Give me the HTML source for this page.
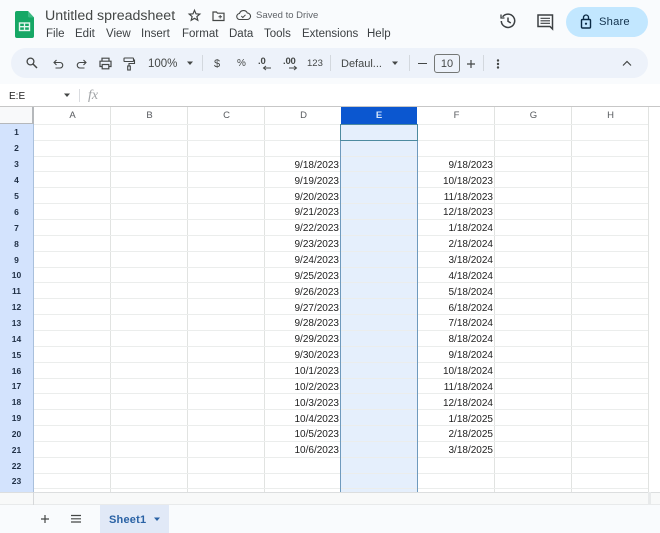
<!DOCTYPE html>
<html><head><meta charset="utf-8">
<style>
*{box-sizing:border-box}
html,body{margin:0;padding:0;width:660px;height:533px;overflow:hidden;background:#f9fbfd;font-family:"Liberation Sans",sans-serif;color:#3c4043}
.a{position:absolute;white-space:nowrap}
.m{top:27px;font-size:11.5px;line-height:14px;color:#3c4043}
.t{top:57px;font-size:11px;line-height:14px;color:#444746}
.ch{top:107px;height:17px;line-height:18px;font-size:9.5px;text-align:center;color:#575a5e;width:77px}
.v{background:#e1e3e1;width:1px}
.h{background:#ebedec;height:1px;left:34px;width:614px}
.rn{left:0;width:33px;text-align:center;font-size:8.5px;font-weight:bold;color:#1f2f45;line-height:16px;height:16px}
.d{font-size:10px;text-align:right;color:#222;line-height:16px;height:16px}
svg{position:absolute;overflow:visible}
</style></head><body>

<!-- header logo -->
<svg style="left:15px;top:11px" width="20" height="27" viewBox="0 0 20 27"><path d="M2 0H13L19 6.500V25a2 2 0 0 1-2 2H2a2 2 0 0 1-2-2V2a2 2 0 0 1 2-2z" fill="#16a765"/><path d="M13 0L19 6.500H14.500a1.500 1.500 0 0 1-1.500-1.500z" fill="#3dba83"/><rect x="4.500" y="12" width="10" height="7.500" fill="none" stroke="#e6f6ee" stroke-width="1.400"/><path d="M9.500 12v7.500M4.500 15.700h10" stroke="#e6f6ee" stroke-width="1.300"/></svg>

<div class="a" style="left:45px;top:7px;font-size:14.2px;line-height:18px;color:#444746">Untitled spreadsheet</div>
<svg style="left:188px;top:9px" width="13" height="13" viewBox="0 0 13 13"><path d="M6.500 1.300l1.500 3.500 3.800.3-2.900 2.500.9 3.700-3.300-2-3.300 2 .9-3.700L1.200 5.100 5 4.800z" fill="none" stroke="#444746" stroke-width="1.200"/></svg>
<svg style="left:212px;top:10px" width="13" height="12" viewBox="0 0 13 12"><path d="M1 2h3.500l1 1.200H12V10.500H1z" fill="none" stroke="#444746" stroke-width="1.200"/><path d="M6.500 6.800h3.500M8.200 5v3.500" stroke="#444746" stroke-width="1"/></svg>
<svg style="left:236px;top:9px" width="15" height="12" viewBox="0 0 15 12"><path d="M4 10.500a3 3 0 0 1-.5-6A4.200 4.200 0 0 1 11.300 4a3.200 3.200 0 0 1 0 6.500z" fill="none" stroke="#444746" stroke-width="1.100"/><path d="M5.300 7l1.500 1.500 2.700-2.700" fill="none" stroke="#444746" stroke-width="1"/></svg>
<div class="a" style="left:256px;top:10px;font-size:9.500px;line-height:12px;color:#5f6368">Saved to Drive</div>

<div class="a m" style="left:46px">File</div>
<div class="a m" style="left:75px">Edit</div>
<div class="a m" style="left:106px">View</div>
<div class="a m" style="left:141px">Insert</div>
<div class="a m" style="left:182px">Format</div>
<div class="a m" style="left:229px">Data</div>
<div class="a m" style="left:264px">Tools</div>
<div class="a m" style="left:302px">Extensions</div>
<div class="a m" style="left:367px">Help</div>

<!-- right header -->
<svg style="left:500px;top:13px" width="16" height="16" viewBox="0 0 16 16"><path d="M2.600 3.800A6.700 6.700 0 1 1 1.300 8" fill="none" stroke="#3c4043" stroke-width="1.500"/><path d="M1 1.500V5H4.500" fill="none" stroke="#3c4043" stroke-width="1.300"/><path d="M8 4.500V8.300L10.800 10" fill="none" stroke="#3c4043" stroke-width="1.500"/></svg>
<svg style="left:537px;top:14px" width="17" height="16" viewBox="0 0 17 16"><path d="M1 1H15.500V15L13 12.500H1z" fill="none" stroke="#3c4043" stroke-width="1.500"/><path d="M3.500 4.300H13M3.500 6.800H13M3.500 9.300H13" stroke="#3c4043" stroke-width="1.200"/></svg>
<div class="a" style="left:566px;top:7px;width:82px;height:30px;border-radius:15px;background:#c2e7ff"></div>
<svg style="left:580px;top:14px" width="12" height="15" viewBox="0 0 12 15"><rect x="1.500" y="5.500" width="9" height="8.500" rx="1" fill="none" stroke="#0b2a44" stroke-width="1.400"/><path d="M3.500 5.500V3.500a2.500 2.500 0 0 1 5 0V5.500" fill="none" stroke="#0b2a44" stroke-width="1.300"/><circle cx="6" cy="9.700" r="1.100" fill="#0b2a44"/></svg>
<div class="a" style="left:599px;top:15px;font-size:11.2px;line-height:15px;color:#12324d;letter-spacing:.2px">Share</div>

<!-- toolbar -->
<div class="a" style="left:11px;top:48px;width:637px;height:30px;border-radius:15px;background:#edf2fa"></div>
<svg style="left:26px;top:57px" width="12" height="12" viewBox="0 0 12 12"><circle cx="4.500" cy="4.500" r="3.400" fill="none" stroke="#444746" stroke-width="1.300"/><path d="M7 7l4 4" stroke="#444746" stroke-width="1.500"/></svg>
<svg style="left:53px;top:59px" width="11" height="10" viewBox="0 0 11 10"><path d="M3.500 1L1 3.500 3.500 6" fill="none" stroke="#444746" stroke-width="1.100"/><path d="M1.500 3.500H7a2.700 2.700 0 0 1 0 5.500H2.500" fill="none" stroke="#444746" stroke-width="1.100"/></svg>
<svg style="left:76px;top:59px" width="11" height="10" viewBox="0 0 11 10"><path d="M7.500 1L10 3.500 7.500 6" fill="none" stroke="#444746" stroke-width="1.100"/><path d="M9.500 3.500H4a2.700 2.700 0 0 0 0 5.500H8.500" fill="none" stroke="#444746" stroke-width="1.100"/></svg>
<svg style="left:99px;top:57px" width="13" height="13" viewBox="0 0 13 13"><path d="M3 4V1.200H10V4M3 9.500H1V4.200H12V9.500H10" fill="none" stroke="#444746" stroke-width="1.200"/><rect x="3.200" y="7.500" width="6.600" height="4.300" fill="none" stroke="#444746" stroke-width="1.200"/></svg>
<svg style="left:123px;top:57px" width="12" height="14" viewBox="0 0 12 14"><rect x="1" y="1" width="9.500" height="3.500" rx=".6" fill="none" stroke="#444746" stroke-width="1.100"/><path d="M10.500 3H11.500V6.500H6V9" fill="none" stroke="#444746" stroke-width="1.100"/><rect x="4.700" y="9" width="2.600" height="4" fill="none" stroke="#444746" stroke-width="1.100"/></svg>
<div class="a t" style="left:148px;top:57px;font-size:11.5px">100%</div>
<svg style="left:186px;top:61px" width="8" height="5"><path d="M1 .5h6L4 4z" fill="#444746"/></svg>
<div class="a" style="left:202px;top:55px;width:1px;height:16px;background:#d3d8de"></div>
<div class="a t" style="left:214px;font-size:11px">$</div>
<div class="a t" style="left:237px;font-size:10px">%</div>
<div class="a t" style="left:258px;top:55px;font-size:9.500px;font-weight:bold;letter-spacing:-.2px">.0</div>
<svg style="left:262px;top:65px" width="10" height="6"><path d="M9 3H2M4 1L1.500 3 4 5" fill="none" stroke="#444746" stroke-width="1"/></svg>
<div class="a t" style="left:283px;top:55px;font-size:9.500px;font-weight:bold;letter-spacing:-.2px">.00</div>
<svg style="left:288px;top:65px" width="10" height="6"><path d="M1 3H8M6 1L8.500 3 6 5" fill="none" stroke="#444746" stroke-width="1"/></svg>
<div class="a t" style="left:307px;font-size:9.500px">123</div>
<div class="a" style="left:330px;top:55px;width:1px;height:16px;background:#d3d8de"></div>
<div class="a t" style="left:341px;font-size:11px">Defaul...</div>
<svg style="left:391px;top:61px" width="8" height="5"><path d="M1 .5h6L4 4z" fill="#444746"/></svg>
<div class="a" style="left:409px;top:55px;width:1px;height:16px;background:#d3d8de"></div>
<div class="a" style="left:418px;top:63px;width:9px;height:1.300px;background:#444746"></div>
<div class="a" style="left:434px;top:54px;width:26px;height:19px;border:1px solid #747775;border-radius:3px;text-align:center;font-size:11px;line-height:18px;color:#444746">10</div>
<svg style="left:466px;top:59px" width="10" height="10"><path d="M5 1v8M1 5h8" stroke="#444746" stroke-width="1.200"/></svg>
<div class="a" style="left:483px;top:55px;width:1px;height:16px;background:#d3d8de"></div>
<svg style="left:496px;top:59px" width="4" height="11"><circle cx="2" cy="1.500" r="1.200" fill="#444746"/><circle cx="2" cy="5" r="1.200" fill="#444746"/><circle cx="2" cy="8.500" r="1.200" fill="#444746"/></svg>
<svg style="left:622px;top:60px" width="10" height="7"><path d="M1 5.500L5 1.500 9 5.500" fill="none" stroke="#444746" stroke-width="1.200"/></svg>

<!-- formula bar -->
<div class="a" style="left:0;top:84px;width:660px;height:23px;background:#fff"></div>
<div class="a" style="left:9px;top:90px;font-size:10px;line-height:13px;color:#222">E:E</div>
<svg style="left:63px;top:93px" width="8" height="5"><path d="M1 .5h6L4 4z" fill="#444746"/></svg>
<div class="a" style="left:79px;top:89px;width:1px;height:13px;background:#dadce0"></div>
<div class="a" style="left:88px;top:89px;font-family:'Liberation Serif',serif;font-style:italic;font-size:14px;line-height:14px;color:#a0a3a6">fx</div>

<!-- grid -->
<div class="a" style="left:0;top:106px;width:660px;height:387px;background:#fff"></div>
<div class="a" style="left:0;top:106px;width:660px;height:1px;background:#c7c7c7"></div>
<div class="a" style="left:0;top:107px;width:33px;height:17px;background:#f8f9fa"></div>
<div class="a" style="left:0;top:123px;width:33px;height:1.500px;background:#b5b8bb"></div>
<div class="a" style="left:32px;top:107px;width:2px;height:17px;background:#b5b8bb"></div>
<div class="a" style="left:0;top:124px;width:33.500px;height:368px;background:#d3e3fd"></div>
<div class="a" style="left:33px;top:124px;width:1px;height:368px;background:#a9c0dc"></div>

<div class="a" style="left:341px;top:124px;width:76px;height:368px;background:#e5effc"></div>
<div class="a" style="left:341px;top:107px;width:76px;height:17px;background:#0b57d0"></div>

<div class="a v" style="left:110px;top:107px;height:385px"></div>
<div class="a v" style="left:187px;top:107px;height:385px"></div>
<div class="a v" style="left:264px;top:107px;height:385px"></div>
<div class="a v" style="left:494px;top:107px;height:385px"></div>
<div class="a v" style="left:571px;top:107px;height:385px"></div>
<div class="a v" style="left:648px;top:107px;height:385px"></div>

<div class="a h" style="top:124px"></div><div class="a h" style="top:140px"></div><div class="a h" style="top:156px"></div><div class="a h" style="top:171px"></div><div class="a h" style="top:187px"></div><div class="a h" style="top:203px"></div><div class="a h" style="top:219px"></div><div class="a h" style="top:235px"></div><div class="a h" style="top:251px"></div><div class="a h" style="top:267px"></div><div class="a h" style="top:282px"></div><div class="a h" style="top:298px"></div><div class="a h" style="top:314px"></div><div class="a h" style="top:330px"></div><div class="a h" style="top:346px"></div><div class="a h" style="top:362px"></div><div class="a h" style="top:378px"></div><div class="a h" style="top:393px"></div><div class="a h" style="top:409px"></div><div class="a h" style="top:425px"></div><div class="a h" style="top:441px"></div><div class="a h" style="top:457px"></div><div class="a h" style="top:473px"></div><div class="a h" style="top:488px"></div>

<div class="a" style="left:340px;top:124px;width:1px;height:368px;background:#6f9abd"></div>
<div class="a" style="left:417px;top:124px;width:1px;height:368px;background:#6f9abd"></div>
<div class="a" style="left:340px;top:124px;width:78px;height:17px;border:1px solid #4d8a9f;background:#e5effc"></div>

<div class="a ch" style="left:34px">A</div>
<div class="a ch" style="left:111px">B</div>
<div class="a ch" style="left:188px">C</div>
<div class="a ch" style="left:265px">D</div>
<div class="a ch" style="left:341px;color:#d5e6fb;font-weight:bold;width:76px">E</div>
<div class="a ch" style="left:418px">F</div>
<div class="a ch" style="left:495px">G</div>
<div class="a ch" style="left:572px">H</div>

<div class="a rn" style="top:124px">1</div><div class="a rn" style="top:140px">2</div><div class="a rn" style="top:156px">3</div><div class="a rn" style="top:172px">4</div><div class="a rn" style="top:188px">5</div><div class="a rn" style="top:204px">6</div><div class="a rn" style="top:220px">7</div><div class="a rn" style="top:236px">8</div><div class="a rn" style="top:252px">9</div><div class="a rn" style="top:267px">10</div><div class="a rn" style="top:283px">11</div><div class="a rn" style="top:299px">12</div><div class="a rn" style="top:315px">13</div><div class="a rn" style="top:331px">14</div><div class="a rn" style="top:347px">15</div><div class="a rn" style="top:363px">16</div><div class="a rn" style="top:378px">17</div><div class="a rn" style="top:394px">18</div><div class="a rn" style="top:410px">19</div><div class="a rn" style="top:426px">20</div><div class="a rn" style="top:442px">21</div><div class="a rn" style="top:458px">22</div><div class="a rn" style="top:473px">23</div>

<div class="a d" style="right:321px;top:158px">9/18/2023</div><div class="a d" style="right:167px;top:158px">9/18/2023</div>
<div class="a d" style="right:321px;top:174px">9/19/2023</div><div class="a d" style="right:167px;top:174px">10/18/2023</div>
<div class="a d" style="right:321px;top:190px">9/20/2023</div><div class="a d" style="right:167px;top:190px">11/18/2023</div>
<div class="a d" style="right:321px;top:205px">9/21/2023</div><div class="a d" style="right:167px;top:205px">12/18/2023</div>
<div class="a d" style="right:321px;top:221px">9/22/2023</div><div class="a d" style="right:167px;top:221px">1/18/2024</div>
<div class="a d" style="right:321px;top:237px">9/23/2023</div><div class="a d" style="right:167px;top:237px">2/18/2024</div>
<div class="a d" style="right:321px;top:253px">9/24/2023</div><div class="a d" style="right:167px;top:253px">3/18/2024</div>
<div class="a d" style="right:321px;top:269px">9/25/2023</div><div class="a d" style="right:167px;top:269px">4/18/2024</div>
<div class="a d" style="right:321px;top:285px">9/26/2023</div><div class="a d" style="right:167px;top:285px">5/18/2024</div>
<div class="a d" style="right:321px;top:301px">9/27/2023</div><div class="a d" style="right:167px;top:301px">6/18/2024</div>
<div class="a d" style="right:321px;top:316px">9/28/2023</div><div class="a d" style="right:167px;top:316px">7/18/2024</div>
<div class="a d" style="right:321px;top:332px">9/29/2023</div><div class="a d" style="right:167px;top:332px">8/18/2024</div>
<div class="a d" style="right:321px;top:348px">9/30/2023</div><div class="a d" style="right:167px;top:348px">9/18/2024</div>
<div class="a d" style="right:321px;top:364px">10/1/2023</div><div class="a d" style="right:167px;top:364px">10/18/2024</div>
<div class="a d" style="right:321px;top:380px">10/2/2023</div><div class="a d" style="right:167px;top:380px">11/18/2024</div>
<div class="a d" style="right:321px;top:396px">10/3/2023</div><div class="a d" style="right:167px;top:396px">12/18/2024</div>
<div class="a d" style="right:321px;top:412px">10/4/2023</div><div class="a d" style="right:167px;top:412px">1/18/2025</div>
<div class="a d" style="right:321px;top:427px">10/5/2023</div><div class="a d" style="right:167px;top:427px">2/18/2025</div>
<div class="a d" style="right:321px;top:443px">10/6/2023</div><div class="a d" style="right:167px;top:443px">3/18/2025</div>

<!-- bottom -->
<div class="a" style="left:0;top:492px;width:660px;height:13px;background:#f8f9f9;border-top:1px solid #dcdedf;border-bottom:1px solid #e8eaeb"></div>
<div class="a" style="left:33px;top:492px;width:1px;height:13px;background:#d6d8da"></div>
<div class="a" style="left:648px;top:492px;width:3px;height:12px;background:#e8eaeb"></div>
<div class="a" style="left:0;top:505px;width:660px;height:28px;background:#f9fbfd"></div>
<svg style="left:40px;top:514px" width="10" height="10"><path d="M5 1v8M1 5h8" stroke="#444746" stroke-width="1.200"/></svg>
<svg style="left:70px;top:514px" width="12" height="10"><path d="M1 1.500h10M1 4.800h10M1 8h10" stroke="#444746" stroke-width="1.200"/></svg>
<div class="a" style="left:100px;top:505px;width:69px;height:28px;background:#e1e9f7"></div>
<div class="a" style="left:109px;top:513px;font-size:11px;font-weight:bold;line-height:15px;color:#2a62a5;letter-spacing:.2px">Sheet1</div>
<svg style="left:153px;top:517px" width="8" height="5"><path d="M1 .5h6L4 4z" fill="#2a62a5"/></svg>

</body></html>
